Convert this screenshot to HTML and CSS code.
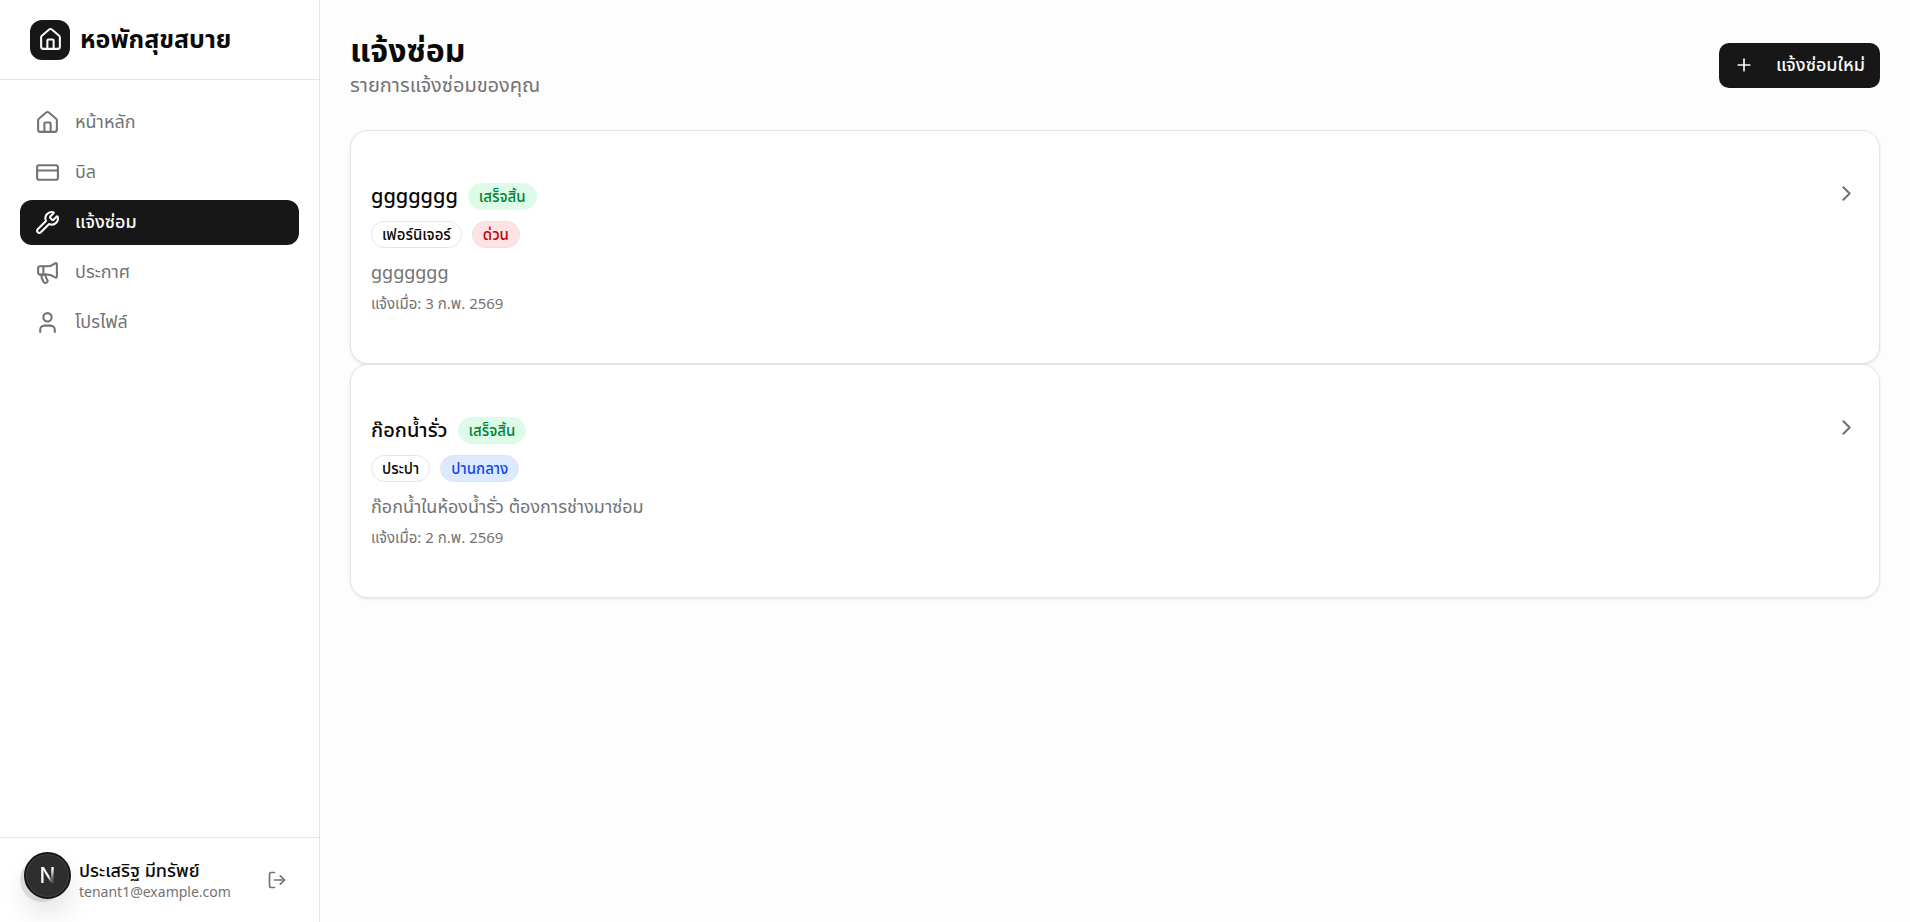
FILE: index.html
```html
<!DOCTYPE html>
<html lang="th">
  <head>
    <meta charset="utf-8">
    <meta name="viewport" content="width=device-width, initial-scale=1">
    <title>แจ้งซ่อม - หอพักสุขสบาย</title>
    <link rel="stylesheet" href="styles.css">
  </head>
  <body>

    <aside class="sidebar">
        <div class="brand">
            <span class="logo">
                <svg class="icon" viewBox="0 0 24 24"><path d="M15 21v-8a1 1 0 0 0-1-1h-4a1 1 0 0 0-1 1v8"/><path d="M3 10a2 2 0 0 1 .709-1.528l7-6a2 2 0 0 1 2.582 0l7 6A2 2 0 0 1 21 10v9a2 2 0 0 1-2 2H5a2 2 0 0 1-2-2z"/></svg>
            </span>
            <span class="brand-name">หอพักสุขสบาย</span>
        </div>

        <nav class="nav">
            <a class="nav-link" href="#home">
                <svg class="icon" viewBox="0 0 24 24"><path d="M15 21v-8a1 1 0 0 0-1-1h-4a1 1 0 0 0-1 1v8"/><path d="M3 10a2 2 0 0 1 .709-1.528l7-6a2 2 0 0 1 2.582 0l7 6A2 2 0 0 1 21 10v9a2 2 0 0 1-2 2H5a2 2 0 0 1-2-2z"/></svg>
                หน้าหลัก
            </a>
            <a class="nav-link" href="#bills">
                <svg class="icon" viewBox="0 0 24 24"><rect width="20" height="14" x="2" y="5" rx="2"/><path d="M2 10h20"/></svg>
                บิล
            </a>
            <a class="nav-link active" href="#repairs" aria-current="page">
                <svg class="icon" viewBox="0 0 24 24"><path d="M14.7 6.3a1 1 0 0 0 0 1.4l1.6 1.6a1 1 0 0 0 1.4 0l3.106-3.105c.32-.322.863-.22.983.218a6 6 0 0 1-8.259 7.057l-7.91 7.91a1 1 0 0 1-2.999-3l7.91-7.91a6 6 0 0 1 7.057-8.259c.438.12.54.662.219.984z"/></svg>
                แจ้งซ่อม
            </a>
            <a class="nav-link" href="#news">
                <svg class="icon" viewBox="0 0 24 24"><path d="M11 6a13 13 0 0 0 8.4-2.8A1 1 0 0 1 21 4v12a1 1 0 0 1-1.6.8A13 13 0 0 0 11 14H5a2 2 0 0 1-2-2V8a2 2 0 0 1 2-2z"/><path d="M6 14a12 12 0 0 0 2.4 7.2 2 2 0 0 0 3.2-2.4A8 8 0 0 1 10 14"/><path d="M8 6v8"/></svg>
                ประกาศ
            </a>
            <a class="nav-link" href="#profile">
                <svg class="icon" viewBox="0 0 24 24"><path d="M19 21v-2a4 4 0 0 0-4-4H9a4 4 0 0 0-4 4v2"/><circle cx="12" cy="7" r="4"/></svg>
                โปรไฟล์
            </a>
        </nav>

        <div class="account">
            <span class="avatar"></span>
            <div class="account-info">
                <div class="account-name">ประเสริฐ มีทรัพย์</div>
                <div class="account-email">tenant1@example.com</div>
            </div>
            <button class="logout" type="button" aria-label="ออกจากระบบ">
                <svg class="icon icon-sm" viewBox="0 0 24 24"><path d="m16 17 5-5-5-5"/><path d="M21 12H9"/><path d="M9 21H5a2 2 0 0 1-2-2V5a2 2 0 0 1 2-2h4"/></svg>
            </button>
        </div>
    </aside>

    <main class="main">
        <header class="page-header">
            <div>
                <h1>แจ้งซ่อม</h1>
                <p class="subtitle">รายการแจ้งซ่อมของคุณ</p>
            </div>
            <button class="new-button" type="button">
                <svg class="icon icon-sm" viewBox="0 0 24 24"><path d="M5 12h14"/><path d="M12 5v14"/></svg>
                แจ้งซ่อมใหม่
            </button>
        </header>

        <a class="card" href="#repair-2">
            <div>
                <div class="card-title">
                    <h2>ggggggg</h2>
                    <span class="badge done">เสร็จสิ้น</span>
                </div>
                <div class="tags">
                    <span class="badge">เฟอร์นิเจอร์</span>
                    <span class="badge urgent">ด่วน</span>
                </div>
                <p class="description">ggggggg</p>
                <p class="date">แจ้งเมื่อ: 3 ก.พ. 2569</p>
            </div>
            <svg class="icon chevron" viewBox="0 0 24 24"><path d="m9 18 6-6-6-6"/></svg>
        </a>

        <a class="card" href="#repair-1">
            <div>
                <div class="card-title">
                    <h2>ก๊อกน้ำรั่ว</h2>
                    <span class="badge done">เสร็จสิ้น</span>
                </div>
                <div class="tags">
                    <span class="badge">ประปา</span>
                    <span class="badge medium">ปานกลาง</span>
                </div>
                <p class="description">ก๊อกน้ำในห้องน้ำรั่ว ต้องการช่างมาซ่อม</p>
                <p class="date">แจ้งเมื่อ: 2 ก.พ. 2569</p>
            </div>
            <svg class="icon chevron" viewBox="0 0 24 24"><path d="m9 18 6-6-6-6"/></svg>
        </a>
    </main>

    <button class="dev-badge" type="button" aria-label="N"><span>N</span></button>

  </body>
</html>
```
FILE: styles.css
```css
* {
    box-sizing: border-box;
}
body {
    margin: 0;
    display: flex;
    min-height: 100vh;
    font-family: "Noto Sans", "Noto Sans Thai", sans-serif;
    font-size: 18px;
    color: #0a0a0a;
    background-color: #fdfdfd;
}
h1, h2, p {
    margin: 0;
}
a {
    color: inherit;
    text-decoration: none;
}
button {
    border: 0;
    font: inherit;
    cursor: pointer;
}
.icon {
    width: 25px;
    height: 25px;
    flex: none;
    fill: none;
    stroke: currentColor;
    stroke-width: 2;
    stroke-linecap: round;
    stroke-linejoin: round;
}
.icon-sm {
    width: 20px;
    height: 20px;
}

/* sidebar */
.sidebar {
    display: flex;
    flex-direction: column;
    flex: none;
    width: 320px;
    border-right: 1px solid #e5e5e5;
    background-color: #fff;
}
.brand {
    display: flex;
    align-items: center;
    gap: 10px;
    height: 80px;
    padding: 0 30px;
    border-bottom: 1px solid #e5e5e5;
}
.logo {
    display: flex;
    align-items: center;
    justify-content: center;
    width: 40px;
    height: 40px;
    border-radius: 12px;
    color: #fafafa;
    background-color: #171717;
}
.brand-name {
    font-size: 25px;
    font-weight: 700;
}
.nav {
    display: flex;
    flex-direction: column;
    flex: 1;
    gap: 5px;
    padding: 20px;
}
.nav-link {
    display: flex;
    align-items: center;
    gap: 15px;
    height: 45px;
    padding: 0 15px;
    border-radius: 12px;
    color: #737373;
}
.nav-link.active {
    color: #fafafa;
    background-color: #171717;
    font-weight: 500;
}
.account {
    display: flex;
    align-items: center;
    gap: 15px;
    padding: 20px;
    border-top: 1px solid #e5e5e5;
}
.avatar {
    flex: none;
    width: 44px;
    height: 44px;
    border-radius: 50%;
    background-color: #e5e5e5;
}
.account-info {
    flex: 1;
    min-width: 0;
}
.account-name {
    font-weight: 500;
    line-height: 24px;
}
.account-email {
    font-size: 14px;
    line-height: 20px;
    color: #737373;
}
.logout {
    display: flex;
    padding: 12px;
    color: #737373;
    background: none;
}

/* page */
.main {
    flex: 1;
    padding: 30px;
}
.page-header {
    display: flex;
    align-items: center;
    justify-content: space-between;
    margin-bottom: 30px;
}
h1 {
    font-size: 32px;
    line-height: 40px;
}
.subtitle {
    font-size: 20px;
    line-height: 30px;
    color: #737373;
}
.new-button {
    display: flex;
    align-items: center;
    gap: 22px;
    height: 45px;
    padding: 0 15px;
    border-radius: 10px;
    font-weight: 500;
    color: #fafafa;
    background-color: #171717;
}
.card {
    display: flex;
    justify-content: space-between;
    padding: 50px 20px;
    border: 1px solid #e5e5e5;
    border-radius: 18px;
    background-color: #fff;
    box-shadow: 0 1px 3px rgba(0, 0, 0, 0.1);
}
.card-title {
    display: flex;
    align-items: center;
    gap: 10px;
    height: 30px;
}
h2 {
    font-size: 20px;
    font-weight: 500;
    line-height: 30px;
}
.tags {
    display: flex;
    gap: 10px;
    margin-top: 10px;
}
.badge {
    height: 27px;
    padding: 0 10px;
    border: 1px solid #e5e5e5;
    border-radius: 14px;
    font-size: 15px;
    font-weight: 500;
    line-height: 25px;
}
.badge.done {
    border-color: #dcfce7;
    color: #008236;
    background-color: #dcfce7;
}
.badge.urgent {
    color: #c10007;
    background-color: #ffe2e2;
}
.badge.medium {
    color: #1447e6;
    background-color: #dbeafe;
}
.description {
    margin-top: 12px;
    line-height: 25px;
    color: #737373;
}
.date {
    margin-top: 8px;
    font-size: 15px;
    line-height: 20px;
    color: #737373;
}
.chevron {
    color: #737373;
}

/* floating dev tools button */
.dev-badge {
    position: fixed;
    left: 24px;
    bottom: 23px;
    width: 47px;
    height: 47px;
    padding: 0;
    border: 2px solid #171717;
    border-radius: 50%;
    font-family: Inter, sans-serif;
    font-size: 21px;
    font-weight: 500;
    background-color: #2e2e2d;
    box-shadow: inset 0 0 0 1px #454545, 0 16px 32px -8px rgba(0, 0, 0, 0.24);
}
.dev-badge span {
    color: transparent;
    background: linear-gradient(to bottom right, #fff 55%, #555 75%);
    background-clip: text;
    -webkit-background-clip: text;
}
```
